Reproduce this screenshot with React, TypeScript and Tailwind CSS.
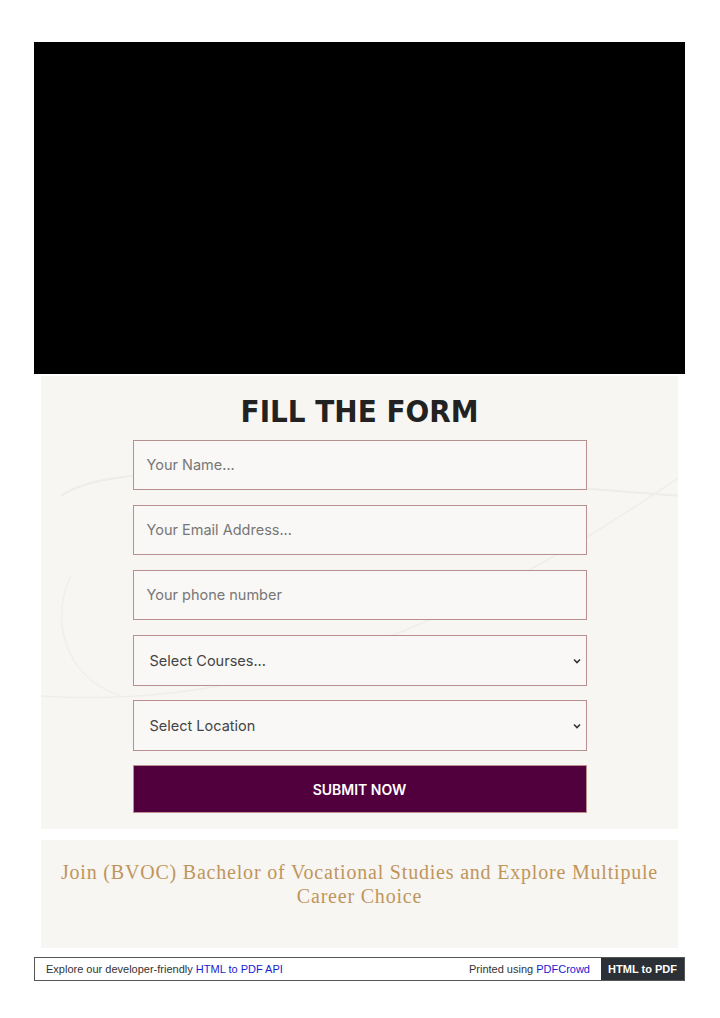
import React from "react";

function Field({ text }: { text: string }) {
  return (
    <div className="h-[50px] border border-[#b98e8e] bg-[#f9f8f6] flex items-center pl-[13px] text-[14.5px] text-[#777]" style={{ fontFamily: "Inter, 'Noto Sans', sans-serif" }}>
      {text}
    </div>
  );
}

function SelectField({ text }: { text: string }) {
  return (
    <div className="h-[51px] border border-[#b98e8e] bg-[#f9f8f6] flex items-center justify-between pl-[16px] pr-[4px] text-[14.5px] text-[#444]" style={{ fontFamily: "Inter, 'Noto Sans', sans-serif" }}>
      <span>{text}</span>
      <svg width="10" height="10" viewBox="0 0 10 10"><path d="M2 3.5 L5 6.5 L8 3.5" stroke="#333" strokeWidth="1.6" fill="none" /></svg>
    </div>
  );
}

export default function App() {
  return (
    <div className="w-[720px] h-[1018px] bg-white relative overflow-hidden">
      <div className="pt-[42px] px-[34px] pr-[35px]">
        <div className="h-[332px] bg-black" />
      </div>
      <div className="mx-[41px] mr-[42px] mt-[2px] h-[453px] bg-[#f7f6f3] relative overflow-hidden">
        <svg className="absolute inset-0" width="637" height="453" viewBox="0 0 637 453">
          <path d="M20 120 C 60 90, 200 85, 640 120" stroke="#eeece8" strokeWidth="2" fill="none" />
          <path d="M0 320 C 150 330, 350 300, 640 100" stroke="#efede9" strokeWidth="1.5" fill="none" />
          <path d="M30 200 C 10 240, 20 300, 80 320" stroke="#f1efeb" strokeWidth="1.5" fill="none" />
        </svg>
        <div className="relative flex flex-col items-center">
          <h1 className="mt-[16px] text-[31px] leading-[38px] font-bold text-[#222]" style={{ fontFamily: "'DejaVu Sans Condensed', 'DejaVu Sans', sans-serif" }}>
            FILL THE FORM
          </h1>
          <div className="w-[454px] mt-[10px] flex flex-col gap-[15px]">
            <Field text="Your Name..." />
            <Field text="Your Email Address..." />
            <Field text="Your phone number" />
            <div className="flex flex-col gap-[14px]">
              <SelectField text="Select Courses..." />
              <SelectField text="Select Location" />
              <div className="h-[48px] bg-[#52003d] border border-[#c09090] flex items-center justify-center text-white text-[14px] font-semibold" style={{ fontFamily: "Inter, 'Noto Sans', sans-serif" }}>
                SUBMIT NOW
              </div>
            </div>
          </div>
        </div>
      </div>
      <div className="mx-[41px] mr-[42px] mt-[11px] h-[108px] bg-[#f7f6f3] pt-[20px] text-center text-[20px] leading-[24px] tracking-[0.8px] text-[#c0955c]" style={{ fontFamily: "'Liberation Serif', serif" }}>
        Join (BVOC) Bachelor of Vocational Studies and Explore Multipule<br />Career Choice
      </div>
      <div className="ml-[34px] mr-[35px] mt-[9px] h-[24px] border border-[#555] flex items-stretch text-[11px]" style={{ fontFamily: "'Liberation Sans', sans-serif" }}>
        <div className="flex-1 flex items-center pl-[11px] text-[#333]">
          Explore our developer-friendly&nbsp;<span className="text-[#1a1ad0]">HTML to PDF API</span>
        </div>
        <div className="flex items-center pr-[11px] text-[#333]">
          Printed using&nbsp;<span className="text-[#1a1ad0]">PDFCrowd</span>
        </div>
        <div className="w-[83px] bg-[#2b3036] text-white font-bold flex items-center justify-center">HTML to PDF</div>
      </div>
    </div>
  );
}
